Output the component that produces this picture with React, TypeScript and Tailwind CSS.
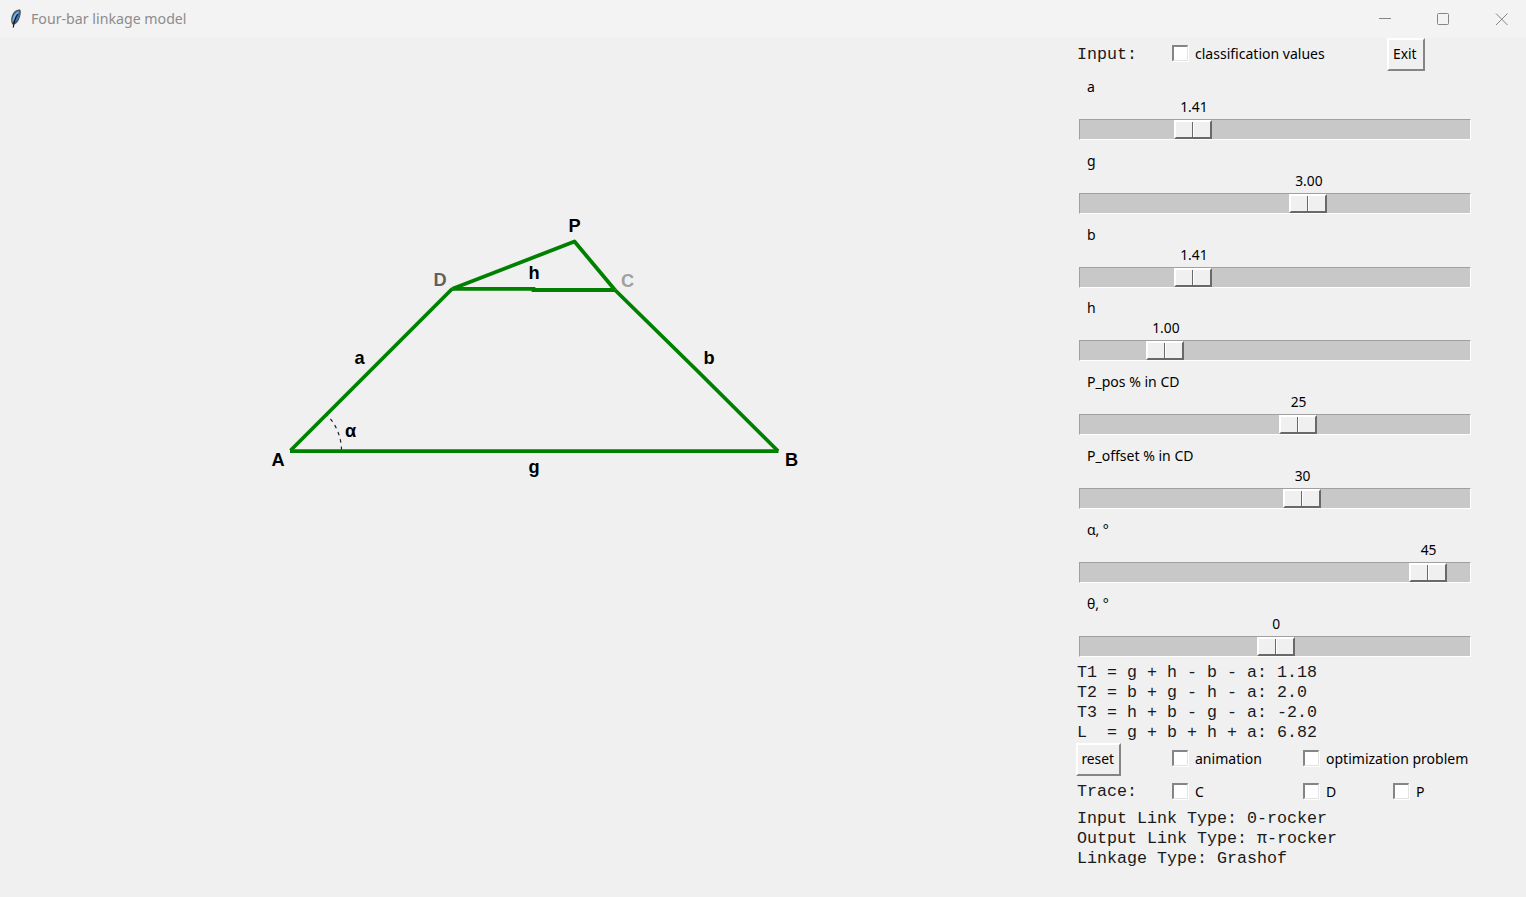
import type { ReactNode } from "react";

const sliders = [
  { label: "a", value: "1.41", pos: 94 },
  { label: "g", value: "3.00", pos: 209 },
  { label: "b", value: "1.41", pos: 94 },
  { label: "h", value: "1.00", pos: 65.5 },
  { label: "P_pos % in CD", value: "25", pos: 199 },
  { label: "P_offset % in CD", value: "30", pos: 203 },
  { label: "α, °", value: "45", pos: 329 },
  { label: "θ, °", value: "0", pos: 176.5 },
];

const mono = "font-['Liberation_Mono','Courier_New',monospace] text-[16.67px] whitespace-pre text-[#1a1a1a]";

function Label({ children }: { children: ReactNode }) {
  return <span className="inline-block origin-left scale-x-[0.935] whitespace-pre">{children}</span>;
}

function Check({ label }: { label: string }) {
  return (
    <label className="flex items-center gap-[7px] pb-[3px]">
      <span className="h-4 w-4 border-t-2 border-l-2 border-r border-b border-t-[#858585] border-l-[#858585] border-r-[#e3e3e3] border-b-[#e3e3e3] bg-white shadow-[1px_1px_0_white]" />
      <Label>{label}</Label>
    </label>
  );
}

function Button({ children, className }: { children: ReactNode; className: string }) {
  return (
    <button
      className={`flex h-[33px] items-center justify-center border-2 border-t-white border-l-white border-r-[#858585] border-b-[#858585] bg-[#f0f0f0] pr-[2px] pb-[3px] ${className}`}
    >
      <span className="inline-block scale-x-[0.92]">{children}</span>
    </button>
  );
}

function Slider({ label, value, pos }: { label: string; value: string; pos: number }) {
  return (
    <div className="h-[73.8px] w-[392px] shrink-0">
      <div className="h-[21px] pl-2 leading-[21px]">
        <Label>{label}</Label>
      </div>
      <div className="h-[22px] leading-[19px]">
        <div className="w-[38px] text-center" style={{ marginLeft: pos + 2 }}>
          <span className="inline-block scale-x-[0.92]">{value}</span>
        </div>
      </div>
      <div className="h-[21px] border border-t-[#a0a0a0] border-r-white border-b-white border-l-[#a0a0a0] bg-[#c8c8c8]">
        <div
          className="flex h-[19px] w-[38px] border-2 border-t-white border-r-[#696969] border-b-[#696969] border-l-white bg-[#f0f0f0]"
          style={{ marginLeft: pos }}
        >
          <div className="w-[17px] border-r border-[#696969]" />
          <div className="grow border-l border-white" />
        </div>
      </div>
    </div>
  );
}

function Feather() {
  return (
    <svg width="14" height="20" viewBox="0 0 14 20" className="-mt-px">
      <path d="M3.3 15.5C.7 11 2.8 4 6.9 1.6c1.7-1 3.8-1.3 4.6-.7.7 2.1.1 5.4-.9 8-.8 2.5-2.5 5.2-4.9 6.6z" fill="#4b5258" />
      <path d="M3.5 13.4C2.6 8.8 5.6 3 10 2 9.4 5.5 7.2 9 3.5 13.4z" fill="#6aaef0" />
      <path d="M5.2 13.7c1-3.8 3.9-6.8 5.3-11 .4 4-1 8.9-5.3 11z" fill="#3976bd" />
      <path d="M8.8 5Q5.2 10 4.3 18.5" fill="none" stroke="#111" strokeWidth="1.2" />
    </svg>
  );
}

function Diagram() {
  return (
    <svg
      className="block h-[859px] w-[1077px] shrink-0 font-['Liberation_Sans',Arial,sans-serif] text-[18.2px] font-bold"
      viewBox="0 38 1077 859"
    >
      <path d="M341.5 450A51 51 0 0 0 327 415" fill="none" stroke="#222" strokeWidth="1.2" strokeDasharray="3.5 4" />
      <g fill="none" stroke="#008000" strokeWidth="3.8">
        <path d="M290 451.2H778.5" />
        <path d="M290.5 450.5L452.5 288.5" />
        <path d="M778 451L697 370.5L615 290" />
        <path d="M452.5 288.8H533.5V290H615" />
        <path d="M452.5 288.8L574.5 241.5L615 290" strokeLinejoin="round" />
      </g>
      <g textAnchor="middle">
        <text x="278" y="465.5">A</text>
        <text x="791.5" y="465.5">B</text>
        <text x="627.5" y="286.5" fill="#a0a0a0">C</text>
        <text x="440" y="285.5" fill="#606060">D</text>
        <text x="574.5" y="231.5">P</text>
        <text x="359.5" y="364">a</text>
        <text x="709" y="364">b</text>
        <text x="534" y="473">g</text>
        <text x="534" y="279">h</text>
        <text x="350.5" y="437">α</text>
      </g>
    </svg>
  );
}

export default function App() {
  return (
    <div className="flex h-[897px] w-[1526px] flex-col overflow-hidden bg-[#f0f0f0] font-['Noto_Sans',sans-serif] text-[15px] leading-5 text-black">
      <header className="flex h-[38px] shrink-0 items-center bg-[#f3f3f3] pl-[9px] text-[#8c8c8c]">
        <Feather />
        <span className="mb-[2px] ml-2 inline-block origin-left scale-x-[0.945] whitespace-pre">Four-bar linkage model</span>
        <svg className="ml-auto" width="176" height="38" viewBox="1350 0 176 38" fill="none" stroke="#858585">
          <path d="M1379 18.5H1391" />
          <rect x="1437.5" y="13.5" width="11" height="11" rx="1" />
          <path d="M1496 13.5L1507.5 25M1507.5 13.5L1496 25" />
        </svg>
      </header>
      <main className="flex grow">
        <Diagram />
        <section className="flex w-[449px] flex-col">
          <div className="flex h-[33px] items-center">
            <span className={`w-[95px] ${mono}`}>Input:</span>
            <div className="w-[215px]">
              <Check label="classification values" />
            </div>
            <Button className="w-[38px]">Exit</Button>
          </div>
          <div className="mt-[5px] flex h-[587px] flex-col pl-[2px]">
            {sliders.map((s) => (
              <Slider key={s.label} {...s} />
            ))}
          </div>
          <div className={`h-[80px] ${mono}`}>
            <p>T1 = g + h - b - a: 1.18</p>
            <p>T2 = b + g - h - a: 2.0</p>
            <p>T3 = h + b - g - a: -2.0</p>
            <p>L  = g + b + h + a: 6.82</p>
          </div>
          <div className="-ml-px flex h-[33px] items-center">
            <Button className="w-[45px]">reset</Button>
            <div className="ml-[51px] w-[131px]">
              <Check label="animation" />
            </div>
            <Check label="optimization problem" />
          </div>
          <div className="flex h-[33px] items-center pb-px">
            <span className={`w-[95px] ${mono}`}>Trace:</span>
            <div className="w-[131px]">
              <Check label="C" />
            </div>
            <div className="w-[90px]">
              <Check label="D" />
            </div>
            <Check label="P" />
          </div>
          <div className={mono}>
            <p>Input Link Type: 0-rocker</p>
            <p>Output Link Type: π-rocker</p>
            <p>Linkage Type: Grashof</p>
          </div>
        </section>
      </main>
    </div>
  );
}
